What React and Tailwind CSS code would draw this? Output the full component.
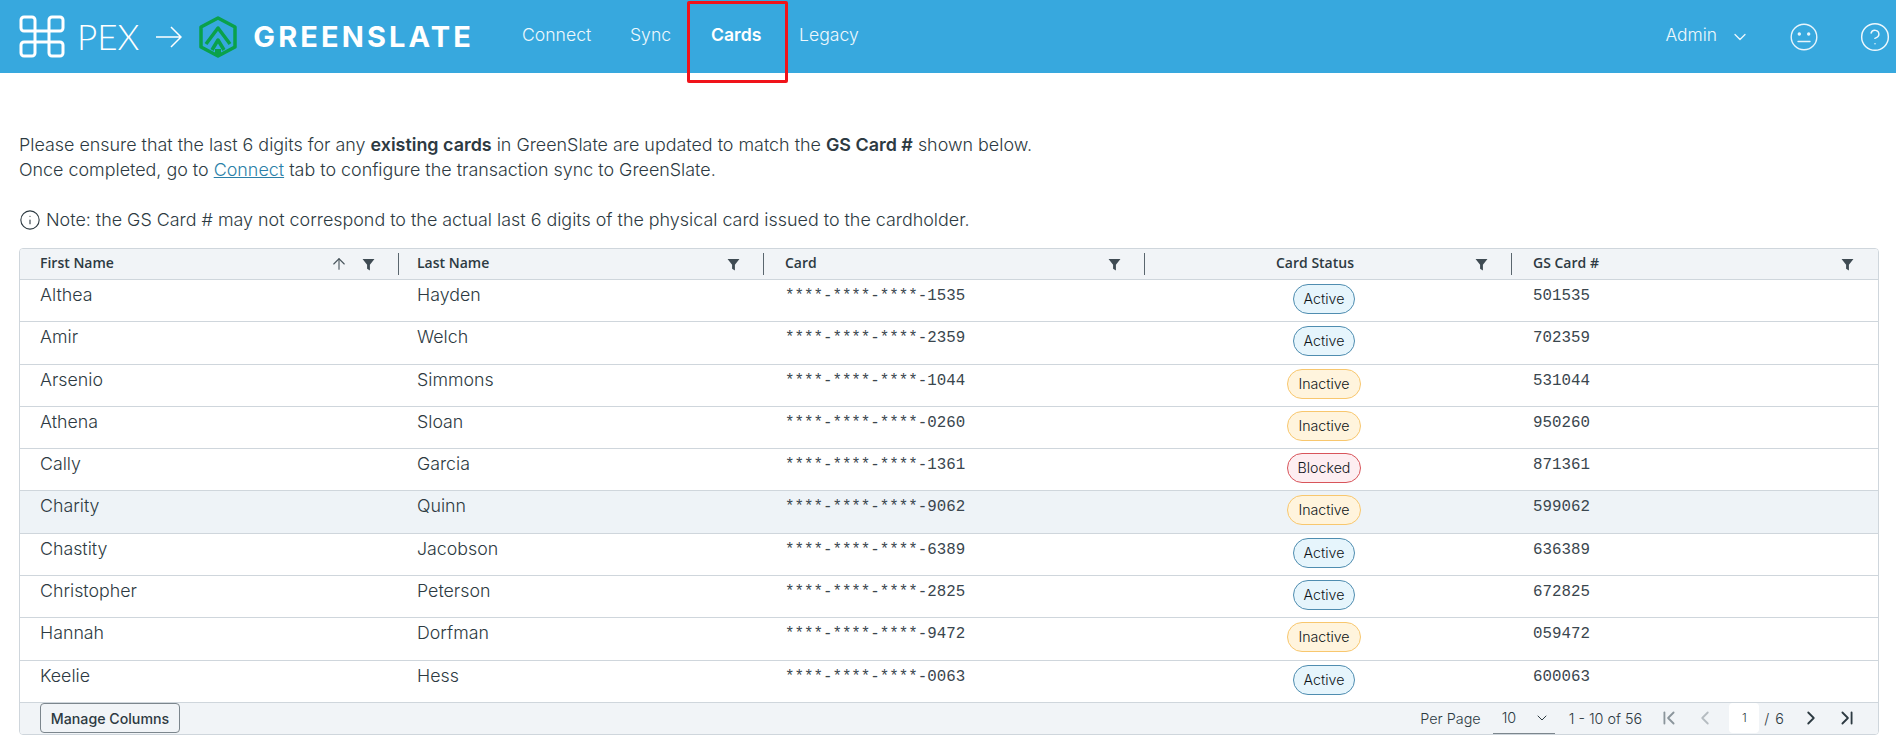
import { ArrowUp, ChevronDown, ChevronLeft, ChevronRight, ChevronFirst, ChevronLast, CircleHelp, Info } from 'lucide-react'

const rows = [
    ['Althea', 'Hayden', '1535', 'Active', '501535'],
    ['Amir', 'Welch', '2359', 'Active', '702359'],
    ['Arsenio', 'Simmons', '1044', 'Inactive', '531044'],
    ['Athena', 'Sloan', '0260', 'Inactive', '950260'],
    ['Cally', 'Garcia', '1361', 'Blocked', '871361'],
    ['Charity', 'Quinn', '9062', 'Inactive', '599062'],
    ['Chastity', 'Jacobson', '6389', 'Active', '636389'],
    ['Christopher', 'Peterson', '2825', 'Active', '672825'],
    ['Hannah', 'Dorfman', '9472', 'Inactive', '059472'],
    ['Keelie', 'Hess', '0063', 'Active', '600063'],
]

const badgeStyles = {
    Active: 'border-[#4f8db0] bg-[#e6f5fc]',
    Inactive: 'border-[#f8c76e] bg-[#fff4dd]',
    Blocked: 'border-[#d8545a] bg-[#fdeef1]',
}

const gridCols = 'grid grid-cols-[379px_365px_381px_367px_1fr]'
const mono = "font-['Liberation_Mono',monospace] text-[15.8px] text-[#3a464e]"

const FilterIcon = () => (
    <svg viewBox="0 0 12 12" className="h-[13px] w-[13px] fill-[#3f4b53]">
        <path d="M0.5 1h11L7.3 6.2V11.5L4.7 10V6.2z" />
    </svg>
)

const PexLogo = () => (
    <svg viewBox="0 0 46 43" className="h-[43px] w-[46px] fill-none stroke-white stroke-[3]">
        <path d="M16 23V5a3 3 0 0 0-3-3H5a3 3 0 0 0-3 3v8a3 3 0 0 0 3 3h36a3 3 0 0 0 3-3V5a3 3 0 0 0-3-3h-8a3 3 0 0 0-3 3v33a3 3 0 0 0 3 3h8a3 3 0 0 0 3-3v-8a3 3 0 0 0-3-3H5a3 3 0 0 0-3 3v8a3 3 0 0 0 3 3h8a3 3 0 0 0 3-3V23" />
    </svg>
)

const GreenslateLogo = () => (
    <svg viewBox="0 0 38 42" className="h-[42px] w-[38px] fill-none stroke-[#0aa14b] stroke-[3.5]" strokeLinejoin="round">
        <path d="M19 2L36 11V31L19 40L2 31V11z" />
        <path d="M7 28L19 12L31 28" />
        <path d="M13 34L19 24L25 34" />
        <path d="M16 38h6v-5h-6z" className="fill-[#0aa14b] stroke-none" />
    </svg>
)

const MehIcon = () => (
    <svg viewBox="0 0 28 28" className="ml-[40px] h-[28px] w-[28px] fill-none stroke-[#e8f5fc] stroke-[1.4]" strokeLinecap="round">
        <circle cx="14" cy="14" r="12.8" />
        <path d="M8 18.5h12" />
        <circle cx="9.3" cy="11" r="1" className="fill-[#e8f5fc]" />
        <circle cx="18.7" cy="11" r="1" className="fill-[#e8f5fc]" />
    </svg>
)

const Header = () => (
    <header className="relative flex h-[73px] items-center bg-[#37a8de] pl-[19px] text-white">
        <div className="flex w-[503px] items-center">
            <PexLogo />
            <span className="ml-[12px] font-['Lato',sans-serif] text-[35px] font-light leading-none">PEX</span>
            <svg viewBox="0 0 26 22" className="ml-[17px] h-[22px] w-[26px] fill-none stroke-white stroke-[1.5]">
                <path d="M0 11h25M15 1l10 10-10 10" />
            </svg>
            <span className="ml-[17px]"><GreenslateLogo /></span>
            <span className="ml-[16px] font-['Inter',sans-serif] text-[29px] font-bold leading-none tracking-[3.1px]">GREENSLATE</span>
        </div>
        <nav className="flex -translate-y-px items-center font-['Inter',sans-serif] text-[17.6px] font-light text-[#eef8fd]">
            <a className="w-[108px]">Connect</a>
            <a className="w-[81px]">Sync</a>
            <a className="w-[88px] font-semibold text-white">Cards</a>
            <a>Legacy</a>
        </nav>
        <div className="ml-auto flex items-center pr-[5px] text-[#eef8fd]">
            <span className="-translate-y-px font-['Inter',sans-serif] text-[17.4px] font-light">Admin</span>
            <ChevronDown className="ml-[13px] h-[20px] w-[20px]" strokeWidth={1.5} />
            <MehIcon />
            <CircleHelp className="ml-[41px] h-[32px] w-[32px]" strokeWidth={1.1} />
        </div>
        <div className="absolute left-[687px] top-[1px] h-[82px] w-[101px] rounded-[2px] border-[3px] border-[#f0131a]" />
    </header>
)

const HeaderCell = ({ label, sort, center, indent }) => (
    <div className={`relative flex h-full items-center pr-[24px] ${indent}`}>
        <span className={`-translate-y-[2px] font-['Open_Sans',sans-serif] text-[14px] font-semibold text-[#2d3a42] ${center ? 'ml-[110px]' : ''}`}>{label}</span>
        <span className="ml-auto flex items-center gap-[14px]">
            {sort && <ArrowUp className="h-[18px] w-[18px] text-[#4a565e]" strokeWidth={1.5} />}
            <FilterIcon />
        </span>
        {!label.startsWith('GS') && <span className="absolute right-0 top-[4px] h-[22px] w-px bg-[#5a666e]" />}
    </div>
)

const Row = ({ row, hover }) => {
    const [first, last, card, status, gs] = row
    return (
        <div className={`${gridCols} h-[42.3px] border-b border-[#cfd6dc] ${hover ? 'bg-[#eef3f7]' : 'bg-white'}`}>
            <div className="pl-[20px] pt-[2px] text-[17.8px] font-light text-[#2d3a42]">{first}</div>
            <div className="pl-[18px] pt-[2px] text-[17.8px] font-light text-[#2d3a42]">{last}</div>
            <div className={`pl-[21px] pt-[5px] ${mono}`}>****-****-****-{card}</div>
            <div className="flex items-start justify-center pr-[9px] pt-[4px]">
                <span className={`rounded-full border px-[10px] text-[14.2px] font-light leading-[28px] text-[#0c1317] ${badgeStyles[status]}`}>{status}</span>
            </div>
            <div className={`pl-[21px] pt-[5px] ${mono}`}>{gs}</div>
        </div>
    )
}

const Footer = () => (
    <div className="flex h-[31px] items-center bg-[#f1f4f7] pl-[20px] pr-[20px] text-[14.4px] font-light text-[#2d3a42]">
        <button className="h-[30px] w-[140px] rounded-[4px] border border-[#7c868d] text-[14.2px] font-medium text-[#2d3a42]">Manage Columns</button>
        <div className="ml-auto flex h-full items-center">
            <span>Per Page</span>
            <span className="ml-[12px] flex h-full w-[62px] items-center justify-between border-b border-[#7c868d] pl-[9px] pr-[5px]">
                10
                <ChevronDown className="h-[16px] w-[16px]" strokeWidth={1.5} />
            </span>
            <span className="ml-[14px]">1 - 10 of 56</span>
            <ChevronFirst className="ml-[16px] h-[22px] w-[22px] text-[#8b959c]" strokeWidth={2} />
            <ChevronLeft className="ml-[14px] h-[22px] w-[22px] text-[#b5bcc1]" strokeWidth={2} />
            <span className="ml-[13px] flex h-[30px] w-[30px] items-center justify-center rounded-[4px] bg-white text-[12px]">1</span>
            <span className="ml-[5px] tracking-[1px]">/ 6</span>
            <ChevronRight className="ml-[15px] h-[22px] w-[22px] text-[#2d3a42]" strokeWidth={2} />
            <ChevronLast className="ml-[14px] h-[22px] w-[22px] text-[#2d3a42]" strokeWidth={2} />
        </div>
    </div>
)

export default function App() {
    return (
        <div className="h-[746px] overflow-hidden bg-white font-['Inter',sans-serif] text-[#2d3a42]">
            <Header />
            <main className="pl-[19px] pr-[17px] pt-[59px]">
                <p className="text-[17.9px] font-light leading-[25px]">
                    Please ensure that the last 6 digits for any <b className="font-semibold">existing cards</b> in GreenSlate are updated to match the <b className="font-semibold">GS Card #</b> shown below.
                    <br />
                    Once completed, go to <a className="text-[#2b7fa8] underline">Connect</a> tab to configure the transaction sync to GreenSlate.
                </p>
                <div className="mt-[25px] flex h-[26px] items-center text-[17.9px] font-light">
                    <Info className="mr-[5px] h-[22px] w-[22px]" strokeWidth={1.2} />
                    Note: the GS Card # may not correspond to the actual last 6 digits of the physical card issued to the cardholder.
                </div>
                <section className="mt-[15px] overflow-hidden rounded-[4px] border border-[#cfd6dc]">
                    <div className={`${gridCols} h-[31px] border-b border-[#cfd6dc] bg-[#f1f4f7]`}>
                        <HeaderCell label="First Name" sort indent="pl-[20px]" />
                        <HeaderCell label="Last Name" indent="pl-[18px]" />
                        <HeaderCell label="Card" indent="pl-[21px]" />
                        <HeaderCell label="Card Status" center indent="pl-[21px]" />
                        <HeaderCell label="GS Card #" indent="pl-[21px]" />
                    </div>
                    {rows.map((row, i) => (
                        <Row key={row[0]} row={row} hover={i === 5} />
                    ))}
                    <Footer />
                </section>
            </main>
        </div>
    )
}
